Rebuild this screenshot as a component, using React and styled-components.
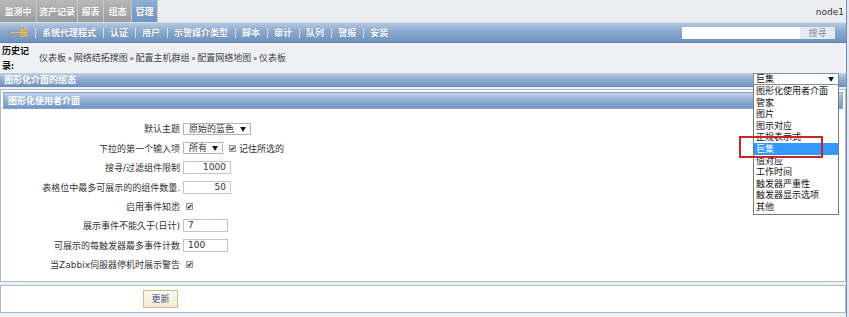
import React from 'react';
import styled, {createGlobalStyle} from 'styled-components';

const GlobalStyle = createGlobalStyle`
  html, body {
    margin: 0;
    padding: 0;
  }
  body {
    width: 849px;
    height: 317px;
    overflow: hidden;
    background: #e4e8ee;
    font-family: 'DejaVu Sans', 'Noto Sans CJK SC', sans-serif;
    font-size: 9px;
    color: #222;
  }
  * {
    box-sizing: border-box;
  }
`;

const tabs = [
  {label: '监测中', w: 37},
  {label: '资产记录', w: 41},
  {label: '报表', w: 26},
  {label: '组态', w: 28},
  {label: '管理', w: 26, active: true},
];

const menu = ['一般', '系统代理程式', '认证', '用户', '示警媒介类型', '脚本', '审计', '队列', '警报', '安装'];

const crumbs = ['仪表板', '网络结拓撲图', '配置主机群组', '配置网络地图', '仪表板'];

const options = [
  '图形化使用者介面',
  '管家',
  '图片',
  '图示对应',
  '正规表示式',
  '巨集',
  '值对应',
  '工作时间',
  '触发器严重性',
  '触发器显示选项',
  '其他',
];

const Check = () => (
  <CheckBox>
    <svg width="7" height="7" viewBox="0 0 7 7">
      <rect x="0.5" y="0.5" width="6" height="6" fill="#e9e9e9" stroke="#9a9a9a" />
      <path d="M1.6 3.6 L2.9 4.9 L5.4 1.9" fill="none" stroke="#333" strokeWidth="1.2" />
    </svg>
  </CheckBox>
);

const App = () => {
  return (
    <Page>
      <GlobalStyle />
      <TopBar>
        {tabs.map((t) => (
          <Tab key={t.label} w={t.w} active={t.active}>
            {t.label}
          </Tab>
        ))}
        <Node>node1</Node>
      </TopBar>

      <SubMenu>
        {menu.map((m, i) => (
          <React.Fragment key={m}>
            {i > 0 && <Sep />}
            <MenuItem active={i === 0}>{m}</MenuItem>
          </React.Fragment>
        ))}
        <Search>
          <SearchInput />
          <SearchBtn>搜寻</SearchBtn>
        </Search>
      </SubMenu>

      <History>
        <HistLabel>历史记录:</HistLabel>
        <Crumbs>
          {crumbs.map((c, i) => (
            <React.Fragment key={i}>
              {i > 0 && <Raquo>»</Raquo>}
              <span>{c}</span>
            </React.Fragment>
          ))}
        </Crumbs>
      </History>

      <SectionBar>图形化介面的组态</SectionBar>

      <Panel>
        <PanelHeader>图形化使用者介面</PanelHeader>
        <Form>
          <Label>默认主题</Label>
          <Field>
            <FakeSelect w={68}>
              原始的蓝色<Arrow>▼</Arrow>
            </FakeSelect>
          </Field>

          <Label>下拉的第一个输入项</Label>
          <Field>
            <FakeSelect w={40}>
              所有<Arrow>▼</Arrow>
            </FakeSelect>
            <Check />
            <span>记住所选的</span>
          </Field>

          <Label>搜寻/过滤组件限制</Label>
          <Field>
            <TextBox w={48} right>1000</TextBox>
          </Field>

          <Label>表格位中最多可展示的的组件数量.</Label>
          <Field>
            <TextBox w={48} right>50</TextBox>
          </Field>

          <Label>启用事件知悉</Label>
          <Field>
            <Check />
          </Field>

          <Label>展示事件不能久于(日计)</Label>
          <Field>
            <TextBox w={45}>7</TextBox>
          </Field>

          <Label>可展示的每触发器最多事件计数</Label>
          <Field>
            <TextBox w={45}>100</TextBox>
          </Field>

          <Label>当Zabbix伺服器停机时展示警告</Label>
          <Field>
            <Check />
          </Field>
        </Form>
      </Panel>

      <Footer>
        <UpdateBtn>更新</UpdateBtn>
      </Footer>

      <Dropdown>
        <DropValue>
          巨集<Arrow>▼</Arrow>
        </DropValue>
        <DropList>
          {options.map((o) => (
            <DropItem key={o} selected={o === '巨集'}>
              {o}
            </DropItem>
          ))}
        </DropList>
      </Dropdown>
      <Marker />
    </Page>
  );
};

const Page = styled.div`
  position: relative;
  width: 847px;
  height: 317px;
  background: #eef0f3;
  border-right: 1px solid #6f8db3;
`;

const TopBar = styled.div`
  display: flex;
  height: 22px;
  background: #eceef1;
`;

const Tab = styled.div`
  width: ${(p) => p.w}px;
  display: flex;
  align-items: center;
  justify-content: center;
  font-family: 'Noto Sans CJK SC', sans-serif;
  font-weight: bold;
  font-size: 9px;
  color: #fff;
  border-right: 1px solid #c9c9c9;
  background: ${(p) =>
    p.active
      ? 'linear-gradient(#8db0d8, #6e94c1)'
      : 'linear-gradient(#b9b9b9, #9c9c9c)'};
  text-shadow: 0 0 1px rgba(0, 0, 0, 0.25);
`;

const Node = styled.div`
  margin-left: auto;
  align-self: flex-end;
  padding: 0 2px 5px 0;
  color: #333;
  font-size: 9px;
`;

const SubMenu = styled.div`
  display: flex;
  align-items: center;
  height: 21px;
  padding-left: 10px;
  background: linear-gradient(#b4c9e2 0%, #8eabcf 40%, #6e92be 100%);
  border-top: 1px solid #d4e0ee;
  border-bottom: 1px solid #5c7fab;
`;

const MenuItem = styled.div`
  font-family: 'Noto Sans CJK SC', sans-serif;
  font-weight: bold;
  font-size: 9px;
  color: ${(p) => (p.active ? '#f6c549' : '#fff')};
  text-shadow: 0 0 1px rgba(40, 60, 90, 0.5);
`;

const Sep = styled.div`
  width: 1px;
  height: 10px;
  margin: 0 6.5px;
  background: rgba(235, 242, 250, 0.75);
`;

const Search = styled.div`
  display: flex;
  margin-left: auto;
  margin-right: 11px;
`;

const SearchInput = styled.div`
  width: 118px;
  height: 12px;
  background: #fff;
`;

const SearchBtn = styled.div`
  width: 35px;
  height: 12px;
  line-height: 12px;
  text-align: center;
  background: #e7eaef;
  color: #7c8aa0;
  font-family: 'Noto Sans CJK SC', sans-serif;
  font-size: 9px;
`;

const History = styled.div`
  display: flex;
  align-items: center;
  height: 29px;
`;

const HistLabel = styled.div`
  width: 31px;
  padding-left: 2px;
  font-family: 'Noto Sans CJK SC', sans-serif;
  font-weight: bold;
  font-size: 9px;
  line-height: 15px;
  color: #111;
`;

const Crumbs = styled.div`
  margin-left: 8px;
  display: flex;
  align-items: center;
  font-family: 'Noto Sans CJK SC', sans-serif;
  font-size: 9px;
  color: #444;
`;

const Raquo = styled.span`
  margin: 0 2px;
  font-weight: bold;
  font-size: 7px;
  color: #333;
`;

const SectionBar = styled.div`
  margin-top: 1px;
  height: 14px;
  line-height: 14px;
  padding-left: 4px;
  background: linear-gradient(#bfd1e6 0%, #90afd2 45%, #7196c2 100%);
  border-bottom: 1px solid #6a8db8;
  font-family: 'Noto Sans CJK SC', sans-serif;
  font-weight: bold;
  font-size: 9px;
  color: #fff;
`;

const Panel = styled.div`
  margin-top: 2px;
  height: 193px;
  padding: 2px;
  background: #fff;
  border: 1px solid #aabbd0;
`;

const PanelHeader = styled.div`
  height: 17px;
  line-height: 15px;
  padding-left: 4px;
  background: linear-gradient(#c3d4e8 0%, #93b1d3 45%, #7398c3 100%);
  border: 1px solid #88a6ca;
  font-family: 'Noto Sans CJK SC', sans-serif;
  font-weight: bold;
  font-size: 9px;
  color: #fff;
`;

const Form = styled.div`
  display: grid;
  grid-template-columns: 177px auto;
  column-gap: 3px;
  grid-auto-rows: 19.45px;
  align-items: center;
  padding-top: 10px;
`;

const Label = styled.div`
  text-align: right;
  font-family: 'DejaVu Sans', 'Noto Sans CJK SC', sans-serif;
  font-size: 9px;
  color: #333;
  white-space: nowrap;
`;

const Field = styled.div`
  display: flex;
  align-items: center;
  gap: 3px;
  font-family: 'Noto Sans CJK SC', sans-serif;
  font-size: 9px;
  color: #333;
`;

const FakeSelect = styled.div`
  position: relative;
  width: ${(p) => p.w}px;
  height: 12px;
  line-height: 10px;
  padding-left: 5px;
  border: 1px solid #b4b4b4;
  background: #fff;
  font-size: 9px;
  color: #333;
`;

const Arrow = styled.span`
  position: absolute;
  right: 4px;
  top: 0;
  font-size: 6px;
  line-height: 10px;
  color: #111;
`;

const TextBox = styled.div`
  width: ${(p) => p.w}px;
  height: 13px;
  line-height: 11px;
  padding: 0 4px;
  border: 1px solid #c4c4c4;
  background: #fff;
  text-align: ${(p) => (p.right ? 'right' : 'left')};
  font-family: 'DejaVu Sans', sans-serif;
  font-size: 9px;
  color: #333;
`;

const CheckBox = styled.span`
  display: inline-flex;
  margin-left: 3px;
  width: 7px;
  height: 7px;
`;

const Footer = styled.div`
  margin-top: 3px;
  height: 28px;
  display: flex;
  align-items: center;
  padding-left: 142px;
  background: #fff;
  border: 1px solid #aabbd0;
`;

const UpdateBtn = styled.div`
  width: 35px;
  height: 18px;
  line-height: 16px;
  text-align: center;
  border: 1px solid #d9b98a;
  background: linear-gradient(#fdfbf2, #f1e9d2);
  font-family: 'Noto Sans CJK SC', sans-serif;
  font-size: 9px;
  color: #2d5288;
`;

const Dropdown = styled.div`
  position: absolute;
  left: 753px;
  top: 73px;
  width: 86px;
`;

const DropValue = styled.div`
  position: relative;
  height: 12px;
  line-height: 10px;
  padding-left: 2px;
  border: 1px solid #7d8ea5;
  background: #fff;
  font-family: 'Noto Sans CJK SC', sans-serif;
  font-size: 9px;
  color: #111;
`;

const DropList = styled.div`
  border: 1px solid #7a7a7a;
  border-top: none;
  background: #fff;
  padding-bottom: 1px;
`;

const DropItem = styled.div`
  height: 11.6px;
  line-height: 11.6px;
  padding-left: 2px;
  font-family: 'Noto Sans CJK SC', sans-serif;
  font-size: 9px;
  color: ${(p) => (p.selected ? '#fff' : '#111')};
  background: ${(p) => (p.selected ? '#3399ff' : 'transparent')};
`;

const Marker = styled.div`
  position: absolute;
  left: 739px;
  top: 136px;
  width: 84px;
  height: 22px;
  border: 2px solid #c9252b;
`;

export default App;
